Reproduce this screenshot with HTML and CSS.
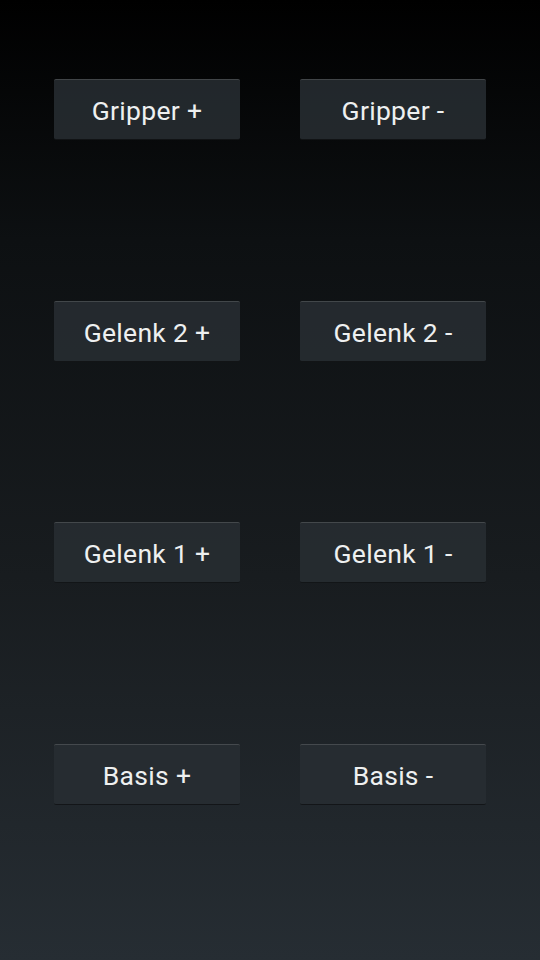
FILE: index.html
```html
<!DOCTYPE html>
<html>
<head>
<meta charset="utf-8">
<link rel="stylesheet" href="styles.css">
</head>
<body>
<main class="pad">
  <button class="btn">Gripper +</button>
  <button class="btn">Gripper -</button>
  <button class="btn">Gelenk 2 +</button>
  <button class="btn">Gelenk 2 -</button>
  <button class="btn">Gelenk 1 +</button>
  <button class="btn">Gelenk 1 -</button>
  <button class="btn">Basis +</button>
  <button class="btn">Basis -</button>
</main>
</body>
</html>
```
FILE: styles.css
```css
html, body {
  margin: 0;
  padding: 0;
}
body {
  width: 540px;
  height: 960px;
  background: linear-gradient(to bottom, #000000 0%, #0d1012 25%, #181c1f 60%, #262d33 100%);
  font-family: Roboto, "Noto Sans", sans-serif;
}
.pad {
  display: grid;
  grid-template-columns: 186px 186px;
  column-gap: 60px;
  row-gap: 160.5px;
  padding: 79px 0 0 54px;
}
.btn {
  height: 61px;
  margin: 0;
  padding: 2px 0 0;
  border: none;
  border-top: 1px solid rgba(255, 255, 255, 0.14);
  border-bottom: 1px solid rgba(0, 0, 0, 0.5);
  border-radius: 2px;
  background: rgba(40, 46, 51, 0.85);
  color: #eef0f0;
  font-family: Roboto, "Noto Sans", sans-serif;
  font-size: 26.5px;
  letter-spacing: 0.3px;
  font-weight: 400;
  box-sizing: border-box;
}
```
